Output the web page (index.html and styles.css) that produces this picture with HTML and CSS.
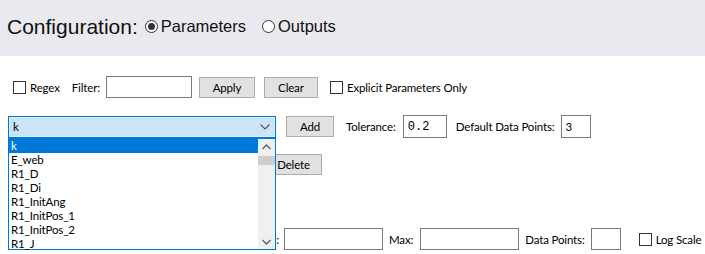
FILE: index.html
```html
<!DOCTYPE html>
<html>
<head>
<meta charset="utf-8">
<link rel="stylesheet" href="styles.css">
</head>
<body>
<div class="header">
  <span class="title">Configuration:</span>
  <label class="radio-opt"><span class="radio checked"></span>Parameters</label>
  <label class="radio-opt second"><span class="radio"></span>Outputs</label>
</div>
<div class="content">
  <div class="row row1">
    <span class="check"></span><span class="lbl regex">Regex</span>
    <span class="lbl filter">Filter:</span>
    <span class="input filter-in"></span>
    <span class="btn apply">Apply</span>
    <span class="btn clear">Clear</span>
    <span class="check explicit"></span><span class="lbl">Explicit Parameters Only</span>
  </div>
  <div class="row row2">
    <div class="combo">
      <span class="combo-val">k</span>
      <svg class="chev" width="10" height="6" viewBox="0 0 10 6"><path d="M0.5 0.5 L5 5 L9.5 0.5" fill="none" stroke="#555" stroke-width="1.1"/></svg>
      <div class="dropdown">
        <div class="items">
          <div class="item sel">k</div>
          <div class="item">E_web</div>
          <div class="item">R1_D</div>
          <div class="item">R1_Di</div>
          <div class="item">R1_InitAng</div>
          <div class="item">R1_InitPos_1</div>
          <div class="item">R1_InitPos_2</div>
          <div class="item">R1_J</div>
        </div>
        <div class="scroll">
          <svg class="arr up" width="9" height="6" viewBox="0 0 9 6"><path d="M0.5 5 L4.5 1 L8.5 5" fill="none" stroke="#606060" stroke-width="1.4"/></svg>
          <div class="thumb"></div>
          <svg class="arr down" width="9" height="6" viewBox="0 0 9 6"><path d="M0.5 1 L4.5 5 L8.5 1" fill="none" stroke="#606060" stroke-width="1.4"/></svg>
        </div>
      </div>
    </div>
    <span class="btn add">Add</span>
    <span class="lbl tol">Tolerance:</span>
    <span class="input tol-in mono">0.2</span>
    <span class="lbl ddp">Default Data Points:</span>
    <span class="input ddp-in">3</span>
  </div>
  <div class="row row3">
    <span class="btn del">Delete</span>
  </div>
  <div class="row row4">
    <span class="lbl minl">Min:</span>
    <span class="input range-in"></span>
    <span class="lbl maxl">Max:</span>
    <span class="input range-in max-in"></span>
    <span class="lbl dpl">Data Points:</span>
    <span class="input dp-in"></span>
    <span class="check logc"></span><span class="lbl">Log Scale</span>
  </div>
</div>
</body>
</html>
```
FILE: styles.css
```css
* { box-sizing: border-box; }
html, body { margin: 0; padding: 0; background: #fff; }
body {
  width: 705px; height: 254px; overflow: hidden;
  font-family: Lato, "Noto Sans", sans-serif;
  font-size: 11.5px; letter-spacing: -0.15px; color: #000;
}
.header {
  height: 56px; background: #e9e9ef;
  display: flex; align-items: center;
  padding-left: 7px; padding-bottom: 3px;
  font-family: "Liberation Sans", Arial, sans-serif;
  letter-spacing: 0; color: #111;
}
.title { font-size: 21px; margin-right: 7px; }
.radio-opt { display: flex; align-items: center; font-size: 16.5px; }
.radio-opt.second { margin-left: 16px; }
.radio {
  width: 13px; height: 13px; border: 1px solid #333; border-radius: 50%;
  margin-right: 3px; position: relative; background: #fff;
}
.radio.checked::after {
  content: ""; position: absolute; left: 2px; top: 2px;
  width: 7px; height: 7px; border-radius: 50%; background: #333;
}
.content { position: relative; }
.row { display: flex; align-items: center; }
.row1 { margin-top: 20px; height: 22px; padding-left: 13px; }
.row2 { margin-top: 17px; height: 23px; padding-left: 8px; }
.row3 { margin-top: 16px; height: 20px; padding-left: 265px; }
.row4 { margin-top: 54px; height: 22px; }
.check {
  width: 13px; height: 13px; border: 1px solid #333; background: #fff;
  margin-right: 4px; flex: none;
}
.lbl { white-space: nowrap; flex: none; }
.regex { margin-right: 12px; }
.filter { margin-right: 6px; }
.input {
  height: 22px; border: 1px solid #7a7a7a; background: #fff;
  display: flex; align-items: center; padding-left: 4px; flex: none;
}
.filter-in { width: 86px; margin-right: 7px; }
.btn {
  height: 21px; background: #e1e1e1; border: 1px solid #adadad;
  display: flex; align-items: center; justify-content: center; flex: none;
}
.apply { width: 56px; margin-right: 9px; }
.clear { width: 54px; margin-right: 12px; }
.combo {
  position: relative; width: 268px; height: 22px;
  border: 1px solid #0078d7; background: #cce4f7;
  box-shadow: inset 0 0 0 1px #dbedfb;
  display: flex; align-items: center; padding-left: 4px; flex: none;
  margin-right: 10px;
}
.combo-val { flex: 1; }
.chev { margin-right: 5px; }
.dropdown {
  position: absolute; left: -1px; top: 21px; width: 268px; height: 112px;
  border: 1px solid #0078d7; background: #fff; display: flex; z-index: 5;
}
.items { flex: 1; }
.item { height: 14px; line-height: 14px; padding-left: 2px; }
.item.sel { background: #0078d7; color: #fff; }
.scroll {
  width: 17px; background: #f0f0f0; position: relative;
}
.arr { position: absolute; left: 4px; }
.arr.up { top: 5px; }
.arr.down { bottom: 4px; }
.thumb {
  position: absolute; left: 0; top: 17px; width: 17px; height: 9px;
  background: #cdcdcd;
}
.add { width: 48px; height: 21px; margin-right: 12px; }
.tol { margin-right: 7px; }
.tol-in { width: 44px; height: 23px; margin-right: 9px; letter-spacing: 0; }
.mono { font-family: "Liberation Mono", monospace; font-size: 12px; }
.ddp { margin-right: 6px; }
.ddp-in { width: 30px; height: 23px; }
.del { width: 57px; height: 21px; }
.minl { width: 279px; text-align: right; margin-right: 5px; }
.range-in { width: 99px; }
.maxl { margin-left: 6px; margin-right: 7px; }
.max-in { margin-right: 6px; }
.dpl { margin-right: 6px; }
.dp-in { width: 30px; margin-right: 18px; }
```
